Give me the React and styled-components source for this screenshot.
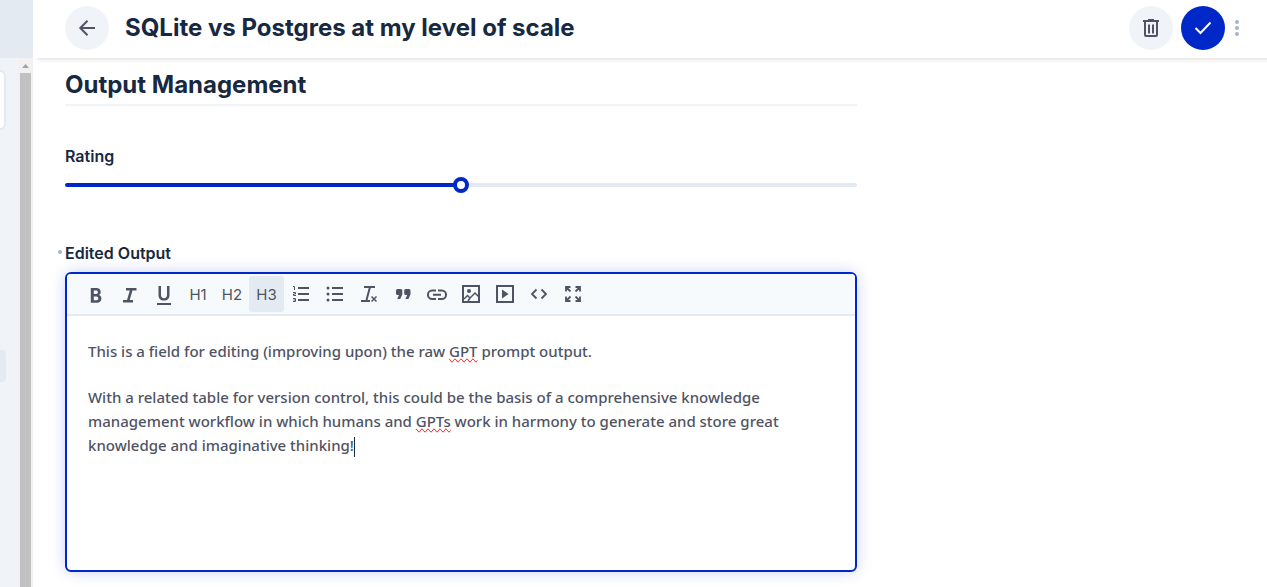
import React, { useState } from 'react';
import styled, { createGlobalStyle } from 'styled-components';

const GlobalStyle = createGlobalStyle`
  *, *::before, *::after { box-sizing: border-box; }
  body {
    margin: 0;
    background: #fff;
    color: #172940;
    font-family: Inter, "Liberation Sans", sans-serif;
  }
  button { font: inherit; border: 0; padding: 0; cursor: pointer; }
`;

const Shell = styled.div`
  display: flex;
  height: 100vh;
  overflow: hidden;
`;

const Sidebar = styled.aside`
  flex: 0 0 33px;
  display: flex;
  flex-direction: column;
  background: #f0f4f9;
`;

const SidebarHead = styled.div`
  flex: 0 0 58px;
  background: #e4eaf1;
`;

const SidebarBody = styled.div`
  flex: 1;
  display: flex;
  justify-content: space-between;
`;

const NavEdge = styled.div`
  width: 6px;
  padding-top: 12px;
  display: flex;
  flex-direction: column;
  justify-content: flex-start;
  gap: 220px;
`;

const SearchEdge = styled.div`
  height: 60px;
  background: #fff;
  border: 2px solid #e4eaf1;
  border-left: 0;
  border-radius: 0 6px 6px 0;
`;

const ActiveEdge = styled.div`
  height: 32px;
  background: #e4eaf1;
  border-radius: 0 4px 4px 0;
`;

const ScrollTrack = styled.div`
  width: 15px;
  display: flex;
  flex-direction: column;
  background: #f1f1f1;
`;

const ScrollArrow = styled.svg`
  flex: 0 0 15px;
  width: 15px;
  fill: #a3a3a3;
`;

const ScrollThumb = styled.div`
  flex: 1;
  margin: 0 2px;
  background: #c1c1c1;
`;

const Main = styled.main`
  flex: 1;
  min-width: 0;
  display: flex;
  flex-direction: column;
`;

const Header = styled.header`
  flex: 0 0 58px;
  display: flex;
  align-items: center;
  gap: 8px;
  padding: 0 18px 2px 32px;
  background: #fff;
  box-shadow: 4px 0 6px rgba(0, 0, 0, 0.2);
  clip-path: inset(0 0 -12px 2px);
`;

const Title = styled.h1`
  flex: 1;
  margin: 0 8px;
  font-size: 24px;
  line-height: 32px;
  font-weight: 700;
`;

const RoundButton = styled.button`
  width: 44px;
  height: 44px;
  display: grid;
  place-items: center;
  border-radius: 50%;
  background: ${(p) => (p.$primary ? '#0027c7' : '#f0f4f9')};
  color: ${(p) => (p.$primary ? '#fff' : '#4f5464')};
`;

const MoreButton = styled.button`
  width: 24px;
  height: 44px;
  display: grid;
  place-items: center;
  margin-left: -8px;
  background: none;
  color: #a2b5cd;
`;

const Content = styled.div`
  flex: 1;
  padding: 10px 32px 15px;
`;

const Form = styled.form`
  max-width: 792px;
  display: flex;
  flex-direction: column;
`;

const SectionTitle = styled.h2`
  margin: 0 0 37px;
  padding-bottom: 2px;
  border-bottom: 2px solid #f0f4f9;
  font-size: 24px;
  line-height: 34px;
  font-weight: 700;
`;

const Field = styled.div`
  display: flex;
  flex-direction: column;
  gap: 6px;
  margin-bottom: 45px;
`;

const Label = styled.label`
  position: relative;
  font-size: 16px;
  line-height: 26px;
  font-weight: 600;
`;

const EditedDot = styled.span`
  position: absolute;
  left: -7px;
  top: 10px;
  width: 4px;
  height: 4px;
  border-radius: 50%;
  background: #a2b5cd;
`;

const Slider = styled.input`
  appearance: none;
  width: 100%;
  height: 20px;
  margin: 0;
  background: none;
  &::-webkit-slider-runnable-track {
    height: 4px;
    border-radius: 2px;
    background: linear-gradient(to right, #0027c7 ${(p) => p.value}%, #e4eaf1 ${(p) => p.value}%);
  }
  &::-webkit-slider-thumb {
    appearance: none;
    width: 16px;
    height: 16px;
    margin-top: -6px;
    border: 4px solid #0027c7;
    border-radius: 50%;
    background: #fff;
  }
`;

const Editor = styled.div`
  min-height: 300px;
  border: 2px solid #0027c7;
  border-radius: 6px;
  background: #fff;
  overflow: hidden;
  box-shadow: 0 0 16px -2px rgba(0, 39, 199, 0.28);
`;

const Toolbar = styled.div`
  display: flex;
  flex-wrap: wrap;
  padding: 2px 12px;
  background: #f6fafd;
  border-bottom: 2px solid #e4eaf1;
`;

const Tool = styled.button`
  width: ${(p) => (p.$active ? 35 : 34)}px;
  height: 36px;
  display: grid;
  place-items: center;
  padding-top: ${(p) => (p.$text ? 2 : 0)}px;
  border-radius: 3px;
  background: ${(p) => (p.$active ? '#e4eaf1' : 'transparent')};
  color: #4f5464;
  font-size: 15px;
  line-height: 20px;
`;

const EditArea = styled.div`
  padding: 23px 21px;
  outline: 0;
  color: #4f5464;
  font-family: "Noto Sans", sans-serif;
  font-size: 15px;
  line-height: 24px;
  font-weight: 500;
`;

const Paragraph = styled.p`
  margin: 0 0 22px;
`;

const Misspelt = styled.span`
  text-decoration-line: spelling-error;
`;

const Caret = styled.span`
  display: inline-block;
  width: 1px;
  height: 20px;
  margin-right: -1px;
  vertical-align: middle;
  background: #172940;
`;

const Glyph = ({ children, size = 24, ...rest }) => (
  <svg width={size} height={size} viewBox="0 0 24 24" fill="currentColor" aria-hidden="true" {...rest}>
    {children}
  </svg>
);

const line = { fill: 'none', stroke: 'currentColor', strokeWidth: 2 };

const tools = [
  ['Bold', <Glyph><path transform="translate(0 1)" d="M6.800 19.800V5h5.600c2.500 0 4.300 1.500 4.300 3.900 0 1.500-.7 2.500-1.800 3 1.600.5 2.500 1.800 2.500 3.600 0 2.700-2 4.300-4.600 4.300zm3-8.900h2.400c1 0 1.700-.6 1.700-1.600s-.7-1.700-1.700-1.700H9.800zm0 6.300h2.600c1.200 0 1.900-.7 1.900-1.800s-.7-1.800-1.900-1.800H9.800z" /></Glyph>],
  ['Italic', <Glyph><path transform="translate(0 1)" d="M5 19.500v-2.500h4l2.800-9.500H8V5h10.500v2.500h-4l-2.800 9.500H15v2.500z" /></Glyph>],
  ['Underline', <Glyph><path transform="translate(0 1)" d="M5 22v-2h14v2zm7-4.500c-3.500 0-5.500-2.100-5.500-5.600V3H9v9c0 1.900 1 3.200 3 3.200s3-1.300 3-3.200V3h2.500v8.900c0 3.500-2 5.600-5.500 5.600z" /></Glyph>],
  ['Heading 1', 'H1'],
  ['Heading 2', 'H2'],
  ['Heading 3', 'H3'],
  ['Numbered list', <Glyph><path d="M9 6h11M9 12h11M9 18h11" {...line} /><path d="M4 4.500h1.500V8M4 10.500h2.500v1.500H4.500v1.500h2.500M4 16.500h2.500v3H4M4.500 18h2" {...line} strokeWidth="1" /></Glyph>],
  ['Bullet list', <Glyph><path d="M9 6h11M9 12h11M9 18h11" {...line} /><circle cx="5" cy="6" r="1.500" /><circle cx="5" cy="12" r="1.500" /><circle cx="5" cy="18" r="1.500" /></Glyph>],
  ['Clear formatting', <Glyph><path d="M7 5h11M13 5l-3.500 13M4 19h9" {...line} /><path d="M14.500 14.500l5 5M19.500 14.500l-5 5" {...line} strokeWidth="1.500" /></Glyph>],
  ['Quote', <Glyph><path d="M6.200 17l1.800-4H6.500A1.500 1.500 0 0 1 5 11.500v-3A1.500 1.500 0 0 1 6.500 7h3.300a1.500 1.500 0 0 1 1.500 1.500v4L9.200 17zM14.400 17l1.800-4h-1.500a1.500 1.500 0 0 1-1.500-1.500v-3A1.500 1.500 0 0 1 14.700 7H18a1.500 1.500 0 0 1 1.500 1.500v4L17.400 17z" /></Glyph>],
  ['Link', <Glyph><path d="M11 17H7.200a4 4 0 0 1 0-8.500H11M13 8.500h3.800a4 4 0 0 1 0 8.500H13M8 12.800h8" {...line} /></Glyph>],
  ['Image', <Glyph><path d="M4 4h16v16H4z" {...line} /><circle cx="10" cy="9" r="2" /><path d="M5 17l3.500-3.500 2.500 2.500 5-5 4 4M9 19l2-3" {...line} strokeWidth="1.500" /></Glyph>],
  ['Media', <Glyph><path d="M4 4h16v16H4z" {...line} /><path d="M9 7.500v9l6.500-4.500z" /></Glyph>],
  ['Source code', <Glyph><path d="M9.500 7.500L5 12l4.500 4.500M14.500 7.500L19 12l-4.500 4.500" {...line} strokeWidth="1.800" /></Glyph>],
  ['Full screen', <Glyph><path d="M9.500 5H5v4.500M5 5l4.500 4.500M14.500 5H19v4.500M19 5l-4.500 4.500M9.500 19H5v-4.500M5 19l4.500-4.500M14.500 19H19v-4.500M19 19l-4.500-4.500" {...line} strokeWidth="1.800" /></Glyph>],
];

export default function App() {
  const [rating, setRating] = useState(50);
  return (
    <Shell>
      <GlobalStyle />
      <Sidebar>
        <SidebarHead />
        <SidebarBody>
          <NavEdge>
            <SearchEdge />
            <ActiveEdge />
          </NavEdge>
          <ScrollTrack>
            <ScrollArrow viewBox="0 0 15 15"><path d="M4 10h7L7.500 6z" /></ScrollArrow>
            <ScrollThumb />
          </ScrollTrack>
        </SidebarBody>
      </Sidebar>
      <Main>
        <Header>
          <RoundButton aria-label="Back">
            <Glyph><path d="M20 12H5.500M12.500 4.800L5.300 12l7.200 7.200" {...line} /></Glyph>
          </RoundButton>
          <Title>SQLite vs Postgres at my level of scale</Title>
          <RoundButton aria-label="Delete">
            <Glyph><path d="M6 5.500V19q0 1 1 1h10q1 0 1-1V5.500M4 5h16M10 8.500v9M14 8.500v9" {...line} /><path d="M9 3h6v2H9z" /></Glyph>
          </RoundButton>
          <RoundButton $primary aria-label="Save">
            <Glyph><path d="M4.500 12l5 5L19.500 6.500" {...line} /></Glyph>
          </RoundButton>
          <MoreButton aria-label="More options">
            <Glyph><circle cx="12" cy="6" r="2" /><circle cx="12" cy="12" r="2" /><circle cx="12" cy="18" r="2" /></Glyph>
          </MoreButton>
        </Header>
        <Content>
          <Form>
            <SectionTitle>Output Management</SectionTitle>
            <Field>
              <Label htmlFor="rating">Rating</Label>
              <Slider id="rating" type="range" min="0" max="100" value={rating} onChange={(e) => setRating(e.target.value)} />
            </Field>
            <Field>
              <Label id="output-label"><EditedDot />Edited Output</Label>
              <Editor>
                <Toolbar role="toolbar" aria-label="Formatting">
                  {tools.map(([name, face]) => (
                    <Tool key={name} type="button" aria-label={name} title={name} $text={typeof face === 'string'} $active={name === 'Heading 3'}>{face}</Tool>
                  ))}
                </Toolbar>
                <EditArea contentEditable suppressContentEditableWarning role="textbox" aria-multiline="true" aria-labelledby="output-label">
                  <Paragraph>This is a field for editing (improving upon) the raw <Misspelt>GPT</Misspelt> prompt output.</Paragraph>
                  <Paragraph>
                    With a related table for version control, this could be the basis of a comprehensive knowledge management workflow in which humans and <Misspelt>GPTs</Misspelt> work in harmony to generate and store great knowledge and imaginative thinking!<Caret />
                  </Paragraph>
                </EditArea>
              </Editor>
            </Field>
          </Form>
        </Content>
      </Main>
    </Shell>
  );
}
